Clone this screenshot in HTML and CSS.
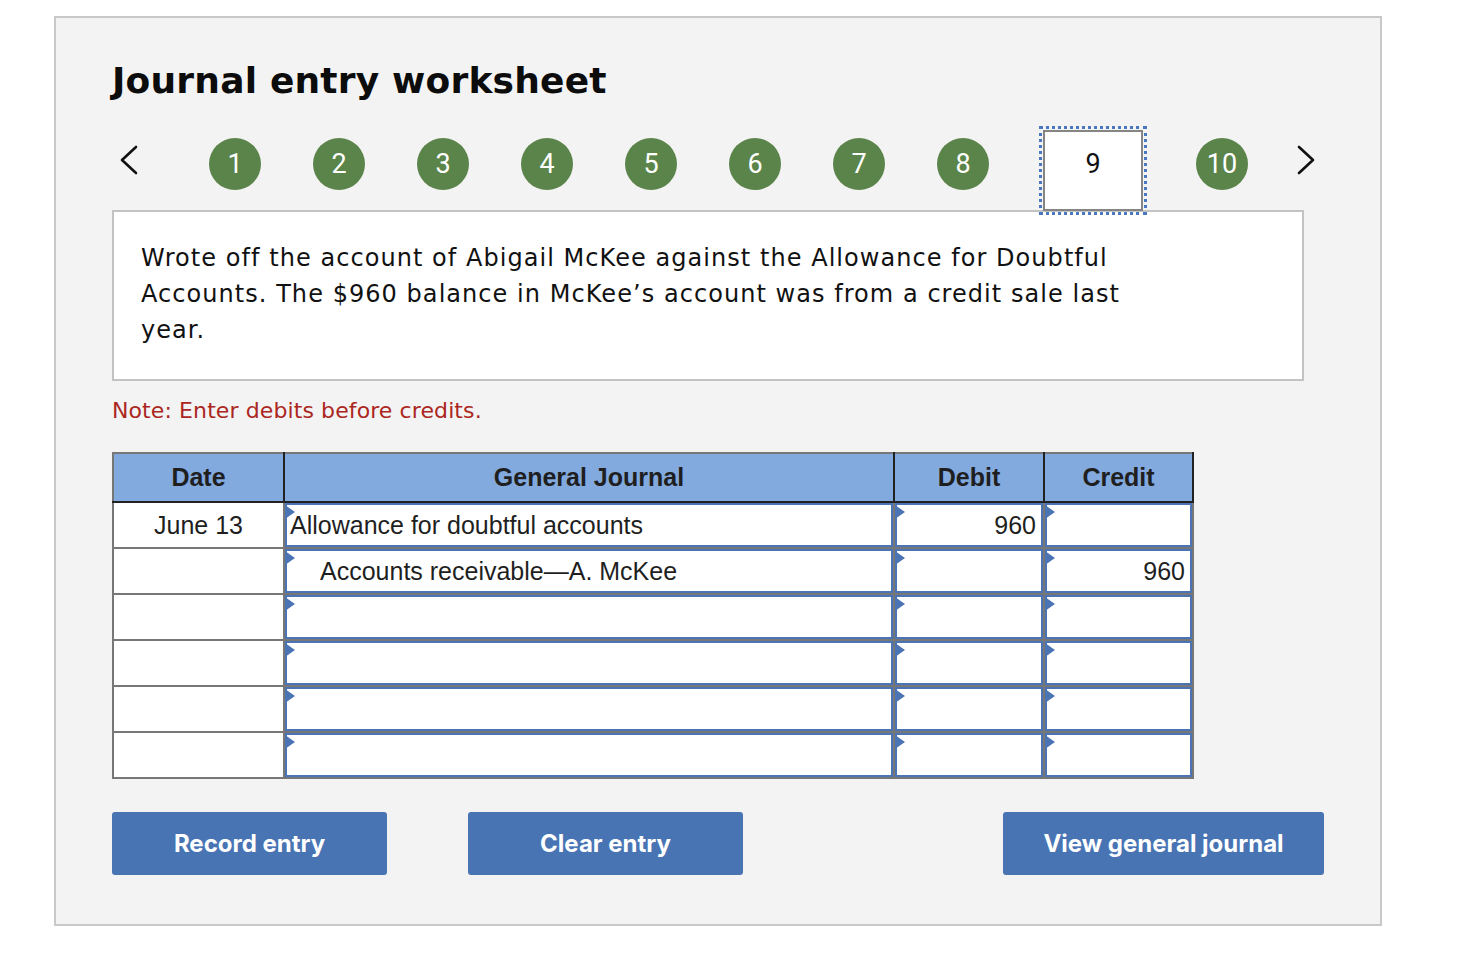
FILE: index.html
```html
<!DOCTYPE html>
<html lang="en">

<head>
    <meta charset="UTF-8">
    <meta name="viewport" content="width=device-width, initial-scale=1.0">
    <title>Journal entry worksheet</title>
    <link rel="stylesheet" href="styles.css">
</head>

<body>
    <div class="panel">
        <h1 class="title">Journal entry worksheet</h1>

        <div class="steps">
            <svg class="arrow arrow-prev" width="20" height="30" viewBox="0 0 20 30">
                <polyline points="17,2 3,15 17,28" fill="none" stroke="#111" stroke-width="2.6" stroke-linecap="round" stroke-linejoin="round" />
            </svg>
            <span class="step">1</span>
            <span class="step">2</span>
            <span class="step">3</span>
            <span class="step">4</span>
            <span class="step">5</span>
            <span class="step">6</span>
            <span class="step">7</span>
            <span class="step">8</span>
            <span class="step current">9</span>
            <span class="step">10</span>
            <svg class="arrow arrow-next" width="20" height="30" viewBox="0 0 20 30">
                <polyline points="3,2 17,15 3,28" fill="none" stroke="#111" stroke-width="2.6" stroke-linecap="round" stroke-linejoin="round" />
            </svg>
        </div>

        <div class="description">
            <p>Wrote off the account of Abigail McKee against the Allowance for Doubtful Accounts. The $960 balance in McKee’s account was from a credit sale last year.</p>
        </div>

        <p class="note">Note: Enter debits before credits.</p>

        <table class="journal">
            <colgroup>
                <col class="col-date">
                <col class="col-account">
                <col class="col-amount">
                <col class="col-amount-last">
            </colgroup>
            <tr>
                <th>Date</th>
                <th>General Journal</th>
                <th>Debit</th>
                <th>Credit</th>
            </tr>
            <tr>
                <td class="date">June 13</td>
                <td><div class="entry">Allowance for doubtful accounts</div></td>
                <td><div class="entry amount">960</div></td>
                <td><div class="entry amount"></div></td>
            </tr>
            <tr>
                <td class="date"></td>
                <td><div class="entry indent">Accounts receivable—A. McKee</div></td>
                <td><div class="entry amount"></div></td>
                <td><div class="entry amount">960</div></td>
            </tr>
            <tr>
                <td class="date"></td>
                <td><div class="entry"></div></td>
                <td><div class="entry amount"></div></td>
                <td><div class="entry amount"></div></td>
            </tr>
            <tr>
                <td class="date"></td>
                <td><div class="entry"></div></td>
                <td><div class="entry amount"></div></td>
                <td><div class="entry amount"></div></td>
            </tr>
            <tr>
                <td class="date"></td>
                <td><div class="entry"></div></td>
                <td><div class="entry amount"></div></td>
                <td><div class="entry amount"></div></td>
            </tr>
            <tr>
                <td class="date"></td>
                <td><div class="entry"></div></td>
                <td><div class="entry amount"></div></td>
                <td><div class="entry amount"></div></td>
            </tr>
        </table>

        <div class="actions">
            <button class="btn">Record entry</button>
            <button class="btn btn-clear">Clear entry</button>
            <button class="btn btn-view">View general journal</button>
        </div>
    </div>
</body>

</html>
```

FILE: styles.css
```css
body {
    margin: 0;
    background-color: #ffffff;
    font-family: 'DejaVu Sans', Verdana, sans-serif;
    color: #111111;
}

.panel {
    box-sizing: border-box;
    width: 1328px;
    height: 910px;
    margin: 16px 0 0 54px;
    padding: 42px 56px 0 56px;
    background-color: #f3f3f3;
    border: 2px solid #c8c8c8;
}

.title {
    margin: 0;
    font-size: 36px;
    font-weight: bold;
    line-height: 42px;
    letter-spacing: 0.2px;
    color: #0c0c0c;
}

.steps {
    display: flex;
    align-items: flex-start;
    margin-top: 28px;
    margin-bottom: -1px;
}

.arrow {
    margin-top: 15px;
    flex-shrink: 0;
}

.arrow-prev {
    margin-left: 7px;
    margin-right: 70px;
}

.arrow-next {
    margin-left: 48px;
}

.step {
    box-sizing: border-box;
    width: 52px;
    height: 52px;
    margin-top: 8px;
    margin-right: 52px;
    border-radius: 50%;
    background-color: #5a8449;
    color: #ffffff;
    font-family: Roboto, 'Liberation Sans', sans-serif;
    font-size: 27px;
    line-height: 52px;
    text-align: center;
    flex-shrink: 0;
}

.step:nth-last-of-type(1) {
    margin-right: 0;
}

.step.current {
    position: relative;
    z-index: 1;
    width: 100px;
    height: 81px;
    margin-top: 0;
    margin-left: 2px;
    margin-right: 53px;
    padding-top: 15px;
    border: 2px solid #858585;
    border-radius: 0;
    background-color: #ffffff;
    color: #111111;
    line-height: 34px;
    outline: 3px dotted #4a78c0;
    outline-offset: 1px;
}

.description {
    box-sizing: border-box;
    width: 1192px;
    padding: 28px 27px 31px 27px;
    background-color: #ffffff;
    border: 2px solid #c3c3c3;
}

.description p {
    max-width: 1015px;
    margin: 0;
    font-size: 24px;
    line-height: 36px;
    letter-spacing: 1.05px;
    color: #111111;
}

.note {
    margin: 17px 0 0 0;
    font-size: 22px;
    line-height: 26px;
    letter-spacing: 0.1px;
    color: #ab2620;
}

.journal {
    width: 1082px;
    margin-top: 28px;
    table-layout: fixed;
    border-collapse: collapse;
    font-family: 'Liberation Sans', Arial, sans-serif;
    font-size: 25px;
    color: #1f1f1f;
}

.col-date {
    width: 171px;
}

.col-account {
    width: 610px;
}

.col-amount {
    width: 150px;
}

.col-amount-last {
    width: 149px;
}

.journal th {
    height: 47px;
    padding: 0;
    background-color: #82aadf;
    border: 2px solid #222222;
    border-top-color: #777777;
    font-weight: bold;
    text-align: center;
}

.journal th:first-child {
    border-left-color: #777777;
}

.journal td {
    padding: 0;
    background-color: #ffffff;
    border: 2px solid #777777;
}

.journal td.date {
    text-align: center;
}

.entry {
    position: relative;
    box-sizing: border-box;
    height: 44px;
    padding: 0 5px 0 3px;
    border: 2px solid #4a74b4;
    line-height: 40px;
    white-space: nowrap;
}

.entry::before {
    content: "";
    position: absolute;
    left: -2px;
    top: 0;
    border-left: 10px solid #4a74b4;
    border-top: 7px solid transparent;
    border-bottom: 7px solid transparent;
}

.entry.indent {
    padding-left: 33px;
}

.entry.amount {
    text-align: right;
}

.actions {
    display: flex;
    margin-top: 33px;
}

.btn {
    width: 275px;
    height: 63px;
    padding: 0;
    background-color: #4874b4;
    border: none;
    border-radius: 3px;
    color: #ffffff;
    font-family: Inter, Roboto, sans-serif;
    font-size: 24px;
    font-weight: bold;
    cursor: pointer;
}

.btn-clear {
    margin-left: 81px;
}

.btn-view {
    width: 321px;
    margin-left: auto;
}
```
